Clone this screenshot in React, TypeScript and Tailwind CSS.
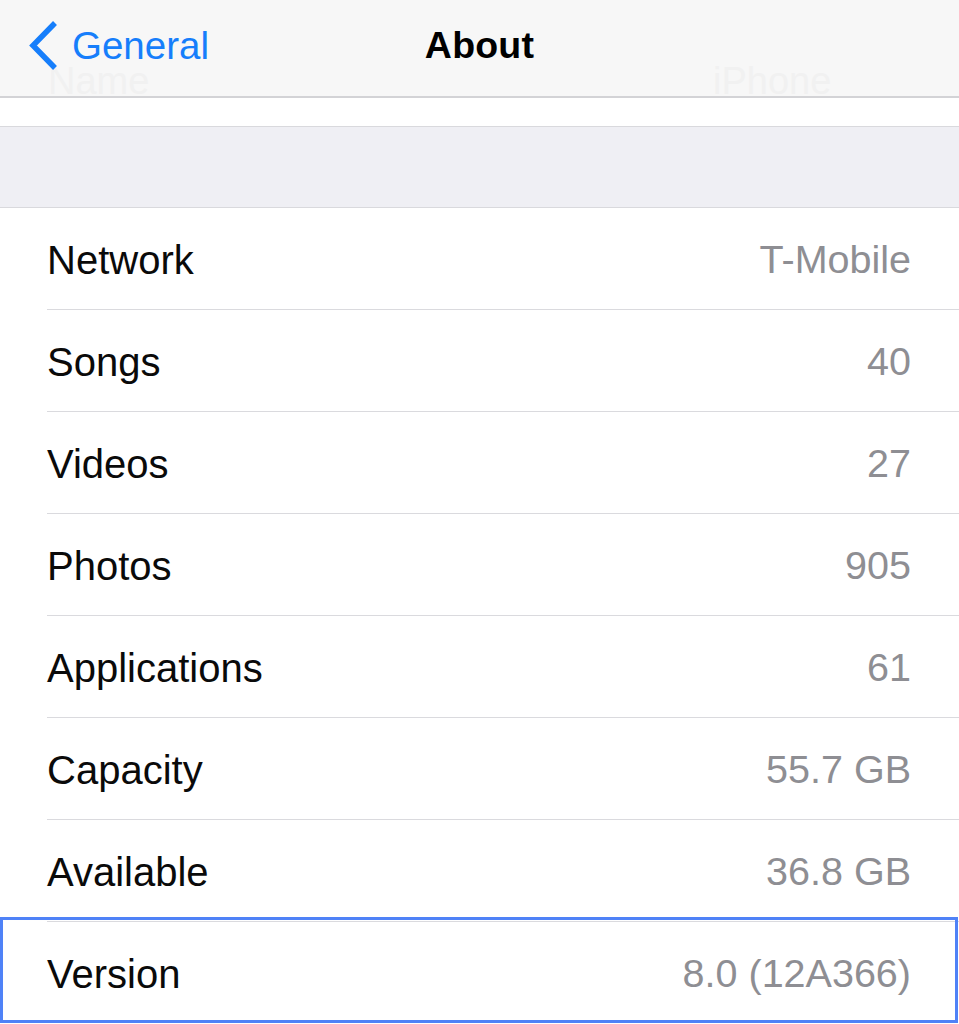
import React from 'react';

type Row = { label: string; value: string };

const rows: Row[] = [
  { label: 'Network', value: 'T-Mobile' },
  { label: 'Songs', value: '40' },
  { label: 'Videos', value: '27' },
  { label: 'Photos', value: '905' },
  { label: 'Applications', value: '61' },
  { label: 'Capacity', value: '55.7 GB' },
  { label: 'Available', value: '36.8 GB' },
  { label: 'Version', value: '8.0 (12A366)' },
];

const font = { fontFamily: '"Liberation Sans", Arial, Helvetica, sans-serif' };

function BackChevron() {
  return (
    <svg width="32" height="52" viewBox="0 0 32 52" className="shrink-0">
      <path d="M28 3 L6 25.5 L28 48" fill="none" stroke="#167efb" strokeWidth="5.5" strokeLinecap="butt" strokeLinejoin="miter" />
    </svg>
  );
}

function NavBar() {
  return (
    <div className="relative h-[98px] bg-[#f7f7f7] border-b-2 border-[#d3d3d6] overflow-hidden">
      {/* rows scrolled up under the translucent bar */}
      <span className="absolute left-[48px] top-[62px] text-[38px] text-[#f1f1f1] leading-none">Name</span>
      <span className="absolute left-[713px] top-[62px] text-[38px] text-[#f1f1f1] leading-none">iPhone</span>
      <div className="relative h-full flex items-center">
        <div className="flex items-center pl-[27px] pb-[4px]">
          <BackChevron />
          <span className="ml-[13px] text-[38.5px] text-[#167efb] leading-none">General</span>
        </div>
        <span className="absolute left-1/2 -translate-x-1/2 top-[27px] text-[37.5px] font-bold text-black leading-none tracking-[0.2px]">
          About
        </span>
      </div>
    </div>
  );
}

function InfoRow({ row, last }: { row: Row; last: boolean }) {
  return (
    <div className="pl-[47px]">
      <div
        className={
          'h-[102px] flex items-center justify-between pr-[48px] pt-[2px] ' +
          (last ? '' : 'border-b border-[#dadade]')
        }
      >
        <span className="text-[40px] text-[#0a0a0a] leading-none">{row.label}</span>
        <span className="text-[39.5px] text-[#8e8e93] leading-none">{row.value}</span>
      </div>
    </div>
  );
}

export default function App() {
  return (
    <div className="w-[959px] h-[1024px] bg-white overflow-hidden" style={font}>
      <NavBar />
      <div className="h-[29px] bg-white border-b border-[#d9d9dd]" />
      <div className="h-[81px] bg-[#efeff4] border-b border-[#d9d9dd]" />
      <div className="relative">
        {rows.map((r, i) => (
          <InfoRow key={r.label} row={r} last={i === rows.length - 1} />
        ))}
        {/* highlight around the Version row */}
        <div className="absolute left-0 top-[709px] w-[958px] h-[106px] border-[3.5px] border-[#4f82f7] pointer-events-none" />
      </div>
    </div>
  );
}
